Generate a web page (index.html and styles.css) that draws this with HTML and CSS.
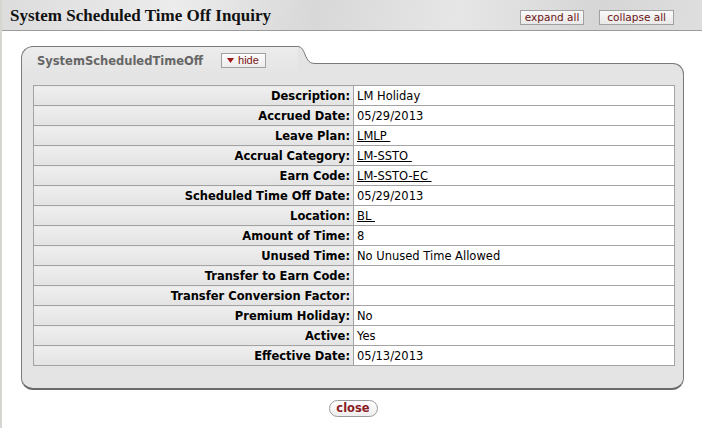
FILE: index.html
```html
<!DOCTYPE html>
<html>
<head>
<meta charset="utf-8">
<link rel="stylesheet" href="styles.css">
</head>
<body>
<div class="header">
  <h1 class="title">System Scheduled Time Off Inquiry</h1>
  <div class="hbtns">
    <button class="hbtn">expand all</button>
    <button class="hbtn">collapse all</button>
  </div>
</div>
<div class="panel">
  <div class="tabrow">
    <div class="tab">
      <span class="tabtitle">SystemScheduledTimeOff</span>
      <button class="hide"><svg class="tri" width="7" height="5" viewBox="0 0 7 5"><path d="M0 0H7L3.5 5Z" fill="#a01818"/></svg>hide</button>
    </div>
    <svg class="curve" width="16" height="28" viewBox="0 0 16 28">
      <path d="M0 0.5C8 0.5 6 17.5 16 17.5V28H0Z" fill="#e4e4e4"/>
      <path d="M0 0.5C8 0.5 6 17.5 16 17.5" fill="none" stroke="#7a7a7a" stroke-width="1"/>
    </svg>
    <div class="tabfill"></div>
  </div>
  <div class="body">
    <table class="grid">
      <tr><th>Description:</th><td>LM Holiday</td></tr>
      <tr><th>Accrued Date:</th><td>05/29/2013</td></tr>
      <tr><th>Leave Plan:</th><td><a href="#">LMLP&nbsp;</a></td></tr>
      <tr><th>Accrual Category:</th><td><a href="#">LM-SSTO&nbsp;</a></td></tr>
      <tr><th>Earn Code:</th><td><a href="#">LM-SSTO-EC&nbsp;</a></td></tr>
      <tr><th>Scheduled Time Off Date:</th><td>05/29/2013</td></tr>
      <tr><th>Location:</th><td><a href="#">BL&nbsp;</a></td></tr>
      <tr><th>Amount of Time:</th><td>8</td></tr>
      <tr><th>Unused Time:</th><td>No Unused Time Allowed</td></tr>
      <tr><th>Transfer to Earn Code:</th><td></td></tr>
      <tr><th>Transfer Conversion Factor:</th><td></td></tr>
      <tr><th>Premium Holiday:</th><td>No</td></tr>
      <tr><th>Active:</th><td>Yes</td></tr>
      <tr><th>Effective Date:</th><td>05/13/2013</td></tr>
    </table>
  </div>
</div>
<div class="footer">
  <button class="close">close</button>
</div>
</body>
</html>
```
FILE: styles.css
```css
html, body {
  margin: 0;
  padding: 0;
  background: #fff;
}
body {
  border-left: 2px solid #d6d6d0;
  min-height: 428px;
  box-sizing: border-box;
  font-family: "DejaVu Sans", Verdana, sans-serif;
  font-size: 11.5px;
  color: #000;
}
.header {
  height: 30px;
  border-bottom: 1px solid #9a9a9a;
  background: linear-gradient(100deg, #dcdcdc 0%, #ececec 25%, #d8d8d8 45%, #e6e6e6 65%, #d6d6d6 85%, #dedede 100%);
  display: flex;
  align-items: center;
  justify-content: space-between;
  padding: 0 28px 0 8px;
  margin-left: -2px;
}
.title {
  margin: 0;
  font-family: "Liberation Serif", "Times New Roman", serif;
  font-weight: bold;
  font-size: 17px;
  color: #111;
  padding-left: 2px;
  padding-top: 1px;
}
.hbtns {
  display: flex;
  gap: 15px;
  padding-top: 5px;
}
.hbtn {
  font-family: "DejaVu Sans", Verdana, sans-serif;
  font-size: 10.5px;
  color: #6b1414;
  background: linear-gradient(#fafafa, #e8e8e8);
  border: 1px solid #a0a0a0;
  height: 15px;
  line-height: 13px;
  padding: 0 7px;
  margin: 0;
}
.hbtn:first-child { padding: 0 4px; }
.panel {
  margin: 15px 18px 0 19px;
}
.tabrow {
  display: flex;
  height: 28px;
  align-items: flex-start;
}
.tab {
  width: 261px;
  height: 27px;
  border-top: 1px solid #7a7a7a;
  border-left: 1px solid #7a7a7a;
  border-top-left-radius: 12px;
  background: linear-gradient(#ececec, #e4e4e4);
  display: flex;
  align-items: flex-start;
  padding-left: 15px;
}
.tabtitle {
  font-weight: bold;
  color: #666;
  font-size: 11.5px;
  margin-top: 7px;
}
.hide {
  margin: 6px 0 0 18px;
  height: 15px;
  padding: 0 6px 0 5px;
  border: 1px solid #a0a0a0;
  background: linear-gradient(#fdfdfd, #ececec);
  font-family: "Liberation Sans", Arial, sans-serif;
  font-size: 11px;
  color: #7a1010;
  display: flex;
  align-items: center;
  gap: 4px;
  line-height: 13px;
}
.tri { display: block; }
.curve { display: block; flex: none; }
.tabfill {
  flex: 1;
  margin-top: 17px;
  height: 10px;
  border-top: 1px solid #7a7a7a;
  border-right: 1px solid #7a7a7a;
  border-top-right-radius: 12px;
  background: #e4e4e4;
}
.body {
  background: #e4e4e4;
  border-left: 1px solid #7a7a7a;
  border-right: 1px solid #7a7a7a;
  border-bottom: 2px solid #6a6a6a;
  border-radius: 0 0 12px 12px;
  padding: 11px 8px 22px 11px;
}
.grid {
  width: 642px;
  border-collapse: collapse;
  border: 1px solid #999;
}
.grid th, .grid td {
  border: 1px solid #a3a3a3;
  height: 20px;
  padding: 0 3px;
  box-sizing: border-box;
  font-size: 11.5px;
  line-height: 14px;
}
.grid th {
  width: 320px;
  text-align: right;
  font-weight: bold;
  background: linear-gradient(#efefef, #e3e3e3);
  padding-right: 3px;
}
.grid td {
  background: #fff;
  text-align: left;
  font-weight: normal;
}
.grid a {
  color: #000;
  text-decoration: underline;
}
.footer {
  display: flex;
  justify-content: center;
  padding-top: 10px;
  padding-left: 2px;
}
.close {
  width: 49px;
  height: 17px;
  border: 1px solid #9a9a9a;
  border-radius: 9px;
  background: linear-gradient(#ffffff, #eeeeee);
  font-family: "DejaVu Sans", Verdana, sans-serif;
  font-weight: bold;
  font-size: 11.5px;
  color: #8a1c24;
  padding: 0;
  line-height: 15px;
}
```
